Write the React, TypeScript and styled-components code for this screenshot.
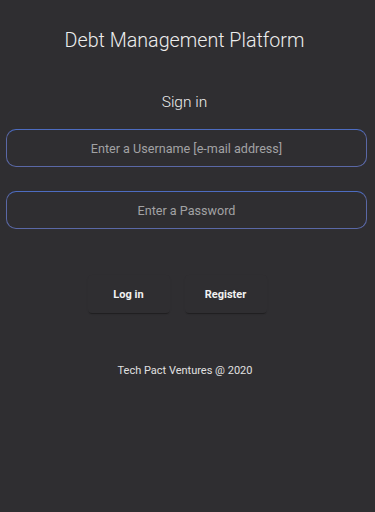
import React from "react";
import styled, { createGlobalStyle } from "styled-components";

const Global = createGlobalStyle`
  html, body { margin: 0; padding: 0; background: #2f2e31; }
  body { font-family: Roboto, "Liberation Sans", sans-serif; }
  * { box-sizing: border-box; }
`;

const Page = styled.div`
  width: 375px;
  height: 512px;
  background: #2f2e31;
  display: flex;
  flex-direction: column;
  align-items: center;
  padding: 28px 8px 0 6px;
`;

const Title = styled.h1`
  margin: 0 4px 0 0;
  font-size: 19.7px;
  font-weight: 300;
  color: #ededed;
  line-height: 26px;
`;

const Subtitle = styled.h2`
  margin: 37px 4px 0 0;
  font-size: 15.5px;
  font-weight: 300;
  color: #ededed;
  line-height: 22px;
`;

const Form = styled.form`
  width: 100%;
  display: flex;
  flex-direction: column;
  gap: 24px;
  margin-top: 16px;
`;

const Field = styled.input`
  width: 100%;
  height: 38px;
  border-radius: 10px;
  border: 1px solid #5a68a6;
  border-top-color: #4d6cc0;
  background: transparent;
  color: #ddd;
  text-align: center;
  font-family: Roboto, "Liberation Sans", sans-serif;
  font-size: 12.6px;
  outline: none;
  &::placeholder { color: #a2a2a4; }
`;

const Actions = styled.div`
  display: flex;
  gap: 15px;
  margin-top: 46px;
  margin-right: 19px;
`;

const Button = styled.button`
  width: 82px;
  height: 38px;
  border: none;
  border-radius: 4px;
  background: #2f2e31;
  color: #f2f2f2;
  font-family: Roboto, "Liberation Sans", sans-serif;
  font-size: 11px;
  font-weight: 700;
  box-shadow: 0 2px 1px -1px rgba(0,0,0,0.3), 0 1px 2px rgba(0,0,0,0.08);
  cursor: pointer;
`;

const Footer = styled.p`
  margin: 50px 3px 0 0;
  font-size: 11px;
  color: #e0e0e0;
  line-height: 16px;
`;

export default function App() {
  return (
    <>
      <Global />
      <Page>
        <Title>Debt Management Platform</Title>
        <Subtitle>Sign in</Subtitle>
        <Form onSubmit={(e) => e.preventDefault()}>
          <Field type="email" placeholder="Enter a Username [e-mail address]" />
          <Field type="password" placeholder="Enter a Password" />
        </Form>
        <Actions>
          <Button type="button">Log in</Button>
          <Button type="button">Register</Button>
        </Actions>
        <Footer>Tech Pact Ventures @ 2020</Footer>
      </Page>
    </>
  );
}
